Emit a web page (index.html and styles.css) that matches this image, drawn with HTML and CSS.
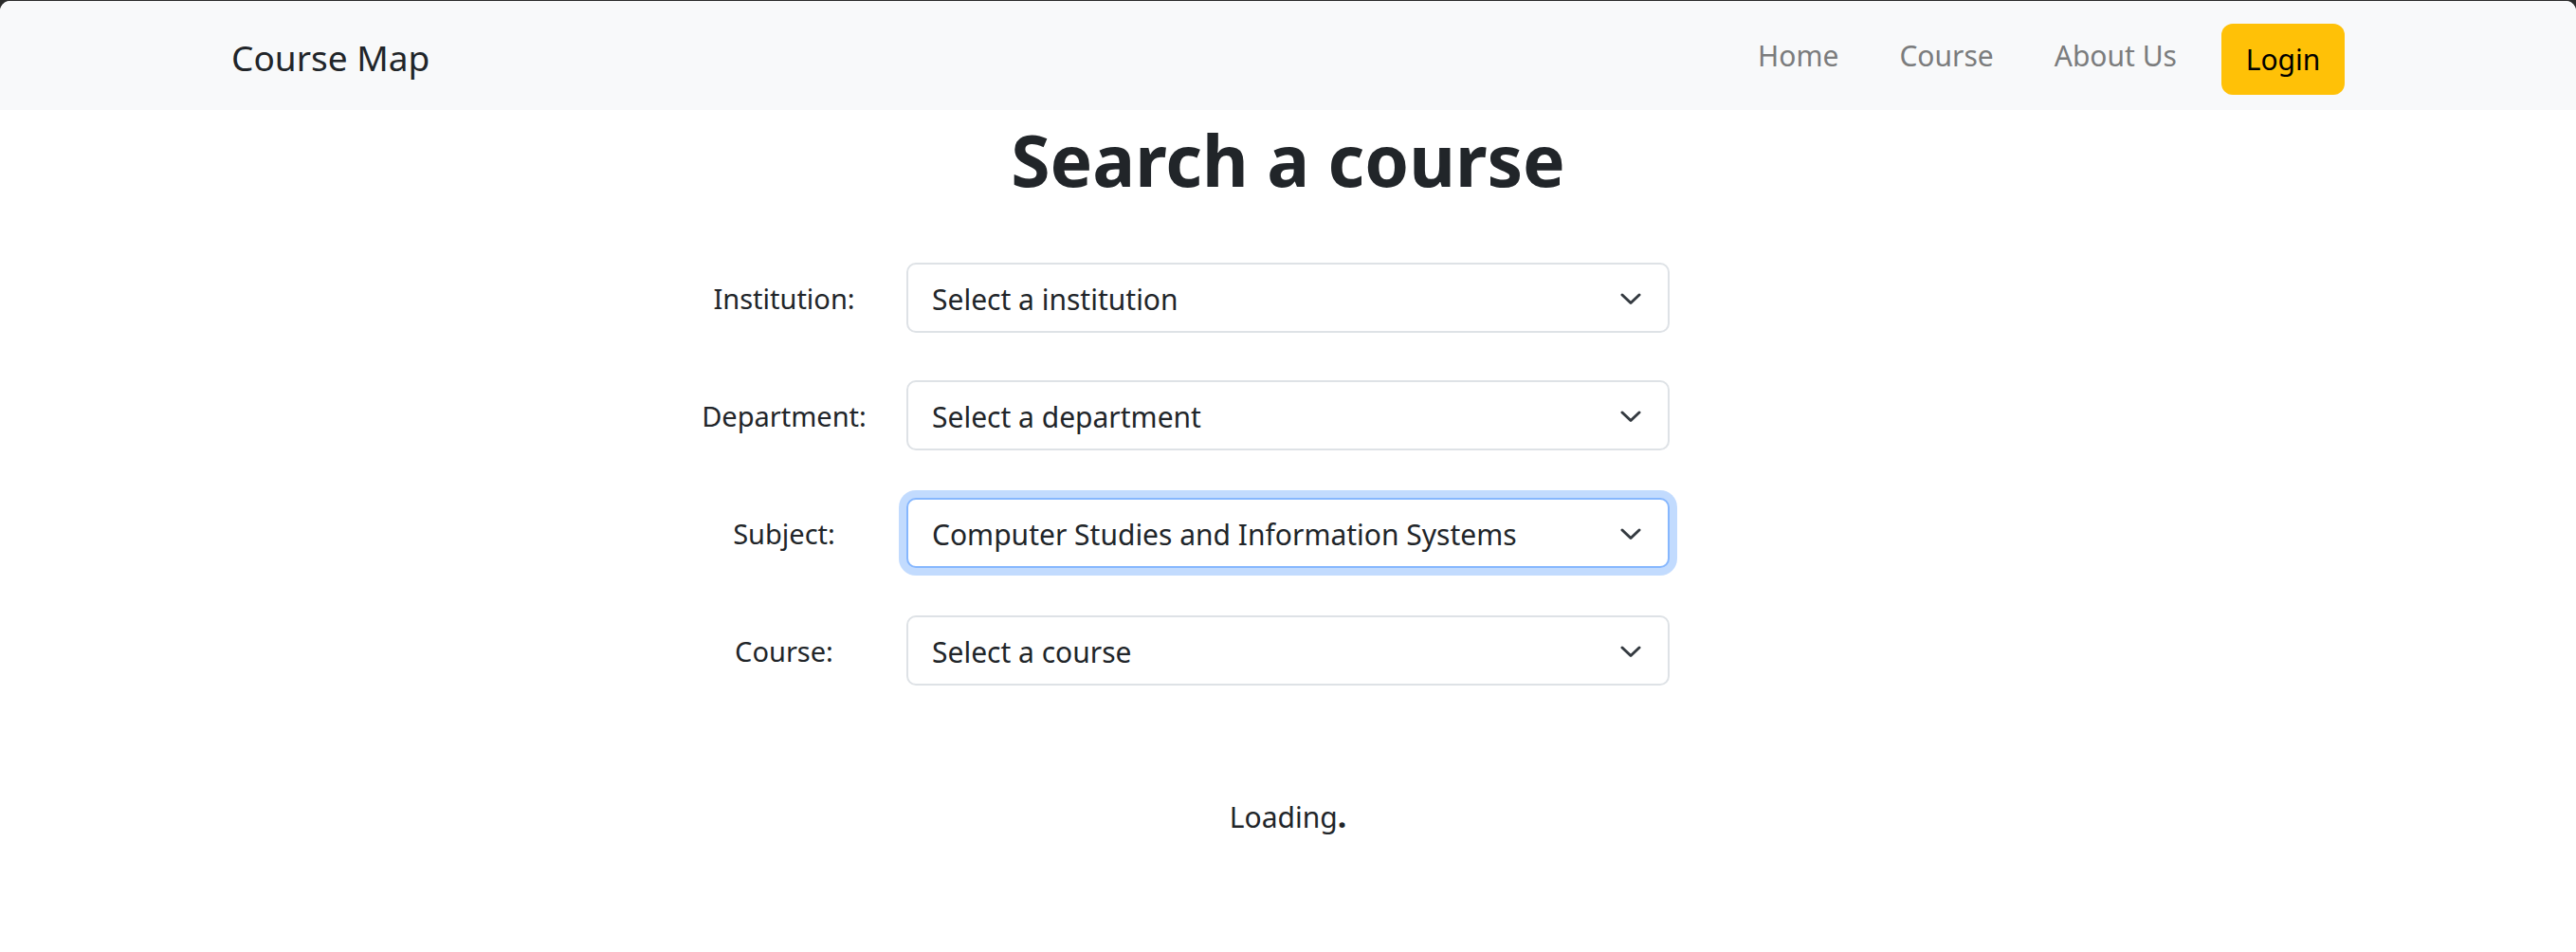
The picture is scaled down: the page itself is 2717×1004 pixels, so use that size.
FILE: index.html
```html
<!DOCTYPE html>
<html lang="en">
<head>
<meta charset="utf-8">
<title>Course Map</title>
<link rel="stylesheet" href="styles.css">
</head>
<body>
<div class="frame">
  <div class="page">
    <nav class="navbar">
      <div class="nav-inner">
        <a class="brand" href="#">Course Map</a>
        <div class="nav-right">
          <ul class="nav-links">
            <li><a href="#">Home</a></li>
            <li><a href="#">Course</a></li>
            <li><a href="#">About Us</a></li>
          </ul>
          <button class="login" type="button">Login</button>
        </div>
      </div>
    </nav>
    <main class="main">
      <h1 class="title">Search a course</h1>
      <form class="search-form">
        <label class="field-label">Institution:</label>
        <div class="select">
          <span class="select-text">Select a institution</span>
          <svg class="chev" width="22" height="13" viewBox="0 0 22 13"><polyline points="2,2 11,10.5 20,2" fill="none" stroke="#343a40" stroke-width="3" stroke-linecap="round" stroke-linejoin="round"/></svg>
        </div>
        <span class="spacer"></span>

        <label class="field-label">Department:</label>
        <div class="select">
          <span class="select-text">Select a department</span>
          <svg class="chev" width="22" height="13" viewBox="0 0 22 13"><polyline points="2,2 11,10.5 20,2" fill="none" stroke="#343a40" stroke-width="3" stroke-linecap="round" stroke-linejoin="round"/></svg>
        </div>
        <span class="spacer"></span>

        <label class="field-label">Subject:</label>
        <div class="select focused">
          <span class="select-text">Computer Studies and Information Systems</span>
          <svg class="chev" width="22" height="13" viewBox="0 0 22 13"><polyline points="2,2 11,10.5 20,2" fill="none" stroke="#343a40" stroke-width="3" stroke-linecap="round" stroke-linejoin="round"/></svg>
        </div>
        <span class="spacer"></span>

        <label class="field-label">Course:</label>
        <div class="select">
          <span class="select-text">Select a course</span>
          <svg class="chev" width="22" height="13" viewBox="0 0 22 13"><polyline points="2,2 11,10.5 20,2" fill="none" stroke="#343a40" stroke-width="3" stroke-linecap="round" stroke-linejoin="round"/></svg>
        </div>
        <span class="spacer"></span>
      </form>
      <p class="loading">Loading<span class="dot">.</span></p>
    </main>
  </div>
</div>
</body>
</html>
```

FILE: styles.css
```css
* { box-sizing: border-box; }

html, body {
  margin: 0;
  padding: 0;
}

body {
  background: #2b2b2b;
  font-family: "Noto Sans", "Open Sans", sans-serif;
  color: #212529;
}

.frame {
  padding-top: 1px;
  min-height: 1004px;
}

.page {
  background: #ffffff;
  min-height: 1003px;
  border-radius: 11px 11px 0 0;
  overflow: hidden;
}

.navbar {
  background: #f8f9fa;
  height: 115px;
}

.nav-inner {
  width: 2229px;
  margin: 0 auto;
  height: 100%;
  display: flex;
  align-items: center;
  justify-content: space-between;
}

.brand {
  font-size: 37px;
  color: #212529;
  text-decoration: none;
  margin-top: 3px;
}

.nav-right {
  display: flex;
  align-items: center;
}

.nav-links {
  list-style: none;
  margin: 0;
  padding: 0;
  display: flex;
  gap: 64px;
}

.nav-links a {
  font-size: 30px;
  color: #7b7c7d;
  text-decoration: none;
}

.login {
  margin-left: 47px;
  width: 130px;
  height: 75px;
  background: #ffc107;
  border: none;
  border-radius: 12px;
  font-family: inherit;
  font-size: 30px;
  color: #000;
  padding: 0;
  margin-top: 8px;
}

.main {
  display: flex;
  flex-direction: column;
  align-items: center;
}

.title {
  margin: 4px 0 0;
  font-size: 75px;
  font-weight: 700;
  line-height: 96px;
  color: #212529;
}

.search-form {
  margin-top: 61px;
  display: grid;
  grid-template-columns: 258px 805px 258px;
  row-gap: 50px;
  align-items: center;
}

.field-label {
  font-size: 29px;
  text-align: center;
  color: #212529;
}

.select {
  height: 74px;
  border: 2px solid #dee2e6;
  border-radius: 10px;
  display: flex;
  align-items: center;
  justify-content: space-between;
  padding: 2px 28px 0 25px;
  background: #fff;
}

.select.focused {
  border-color: #86b7fe;
  box-shadow: 0 0 0 8px rgba(13, 110, 253, 0.25);
}

.select-text {
  font-size: 30px;
  color: #212529;
}

.chev {
  display: block;
}

.loading {
  margin: 115px 0 0;
  font-size: 30px;
  line-height: 44px;
  color: #212529;
}

.dot {
  font-weight: 700;
  font-size: 34px;
}
```
